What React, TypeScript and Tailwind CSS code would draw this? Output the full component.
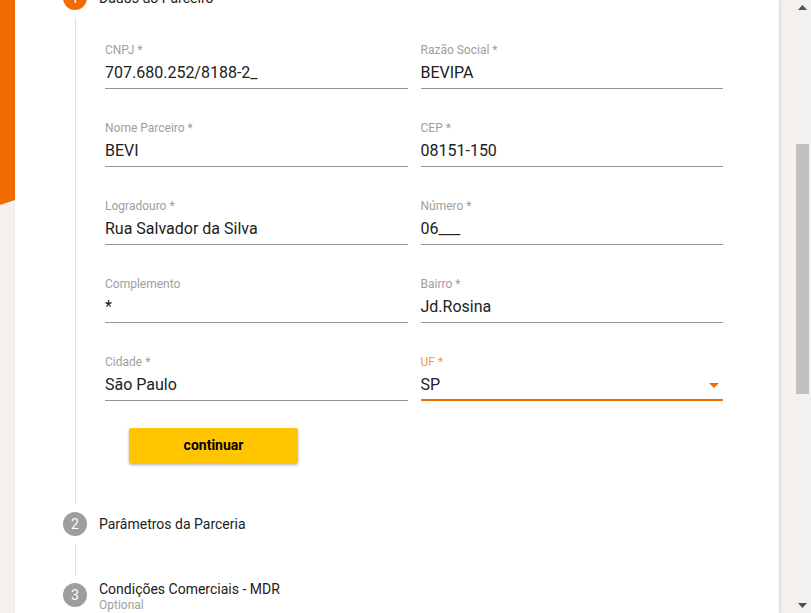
import { useState } from "react";

type Field = {
  label: string;
  value: string;
  focused?: boolean;
  select?: boolean;
};

const FIELDS: Field[] = [
  { label: "CNPJ *", value: "707.680.252/8188-2_" },
  { label: "Razão Social *", value: "BEVIPA" },
  { label: "Nome Parceiro *", value: "BEVI" },
  { label: "CEP *", value: "08151-150" },
  { label: "Logradouro *", value: "Rua Salvador da Silva" },
  { label: "Número *", value: "06___" },
  { label: "Complemento", value: "*" },
  { label: "Bairro *", value: "Jd.Rosina" },
  { label: "Cidade *", value: "São Paulo" },
  { label: "UF *", value: "SP", focused: true, select: true },
];

function StepIcon({ n, active }: { n: number; active?: boolean }) {
  return (
    <div
      className={`flex h-[24px] w-[24px] shrink-0 items-center justify-center rounded-full text-[14px] text-white ${
        active ? "bg-[#ef6c00]" : "bg-[#9e9e9e]"
      }`}
    >
      {n}
    </div>
  );
}

function TextField({ field }: { field: Field }) {
  return (
    <div className="flex flex-col">
      <label
        className={`h-[16px] text-[12px] leading-[16px] ${
          field.focused ? "text-[#f39a45]" : "text-[#9e9e9e]"
        }`}
      >
        {field.label}
      </label>
      <div
        className={`mt-[5px] flex h-[26px] items-start justify-between ${
          field.focused
            ? "border-b-2 border-[#ef6c00]"
            : "border-b border-[#949494]"
        }`}
      >
        <span className="text-[16px] leading-[20px] text-[#212121]">
          {field.value}
        </span>
        {field.select && (
          <svg width="10" height="5" viewBox="0 0 10 5" className="mr-[4px] mt-[8px]">
            <path d="M0 0h10L5 5z" fill="#ef6c00" />
          </svg>
        )}
      </div>
    </div>
  );
}

function Scrollbar() {
  return (
    <div className="flex w-[17px] shrink-0 flex-col items-center bg-[#f1f1f1]">
      <svg width="9" height="5" viewBox="0 0 9 5" className="mt-[5px]">
        <path d="M0 5h9L4.5 0z" fill="#505050" />
      </svg>
      <div className="mt-[134px] h-[250px] w-[13px] bg-[#c1c1c1]" />
      <div className="flex-1" />
      <svg width="9" height="5" viewBox="0 0 9 5" className="mb-[5px]">
        <path d="M0 0h9L4.5 5z" fill="#505050" />
      </svg>
    </div>
  );
}

export default function App() {
  const [fields] = useState(FIELDS);

  return (
    <div
      className="flex h-[613px] w-[811px] overflow-hidden bg-[#f5f1ee]"
      style={{ fontFamily: "Roboto, 'Liberation Sans', sans-serif" }}
    >
      {/* Left accent strip */}
      <div className="w-[15px] shrink-0">
        <div className="h-[205px] bg-[#ef6c00] [clip-path:polygon(0_0,100%_0,100%_200px,0_205px)]" />
      </div>

      {/* Card */}
      <div className="relative z-10 w-[764px] shrink-0 bg-white shadow-[1px_0_3px_rgba(0,0,0,0.15)]">
        <div className="mt-[-14px] flex flex-col pl-[48px]">
          {/* Step 1 */}
          <div className="flex items-center gap-[12px]">
            <StepIcon n={1} active />
            <span className="text-[14px] text-[#212121]">Dados do Parceiro</span>
          </div>
          <div className="ml-[12px] mt-[8px] border-l border-[#e0e0e0] pb-[41px] pl-[29px] pt-[24px]">
            <div className="grid w-[618px] grid-cols-2 gap-x-[13px] gap-y-[31px]">
              {fields.map((f) => (
                <TextField key={f.label} field={f} />
              ))}
            </div>
            <button className="ml-[24px] mt-[27px] h-[35px] w-[169px] rounded-[2px] bg-[#ffc600] text-[14px] font-bold text-black shadow-[0_2px_3px_rgba(0,0,0,0.3)]">
              continuar
            </button>
          </div>

          {/* Step 2 */}
          <div className="mt-[8px] flex items-center gap-[12px]">
            <StepIcon n={2} />
            <span className="text-[14px] text-[#212121]">Parâmetros da Parceria</span>
          </div>
          <div className="ml-[12px] mt-[8px] h-[32px] border-l border-[#e0e0e0]" />

          {/* Step 3 */}
          <div className="mt-[7px] flex items-start gap-[12px]">
            <StepIcon n={3} />
            <div className="mt-[-3px] flex flex-col">
              <span className="text-[14px] leading-[18px] text-[#212121]">
                Condições Comerciais - MDR
              </span>
              <span className="text-[12px] leading-[14px] text-[#9e9e9e]">Optional</span>
            </div>
          </div>
        </div>
      </div>

      <div className="w-[15px] shrink-0" />
      <Scrollbar />
    </div>
  );
}
